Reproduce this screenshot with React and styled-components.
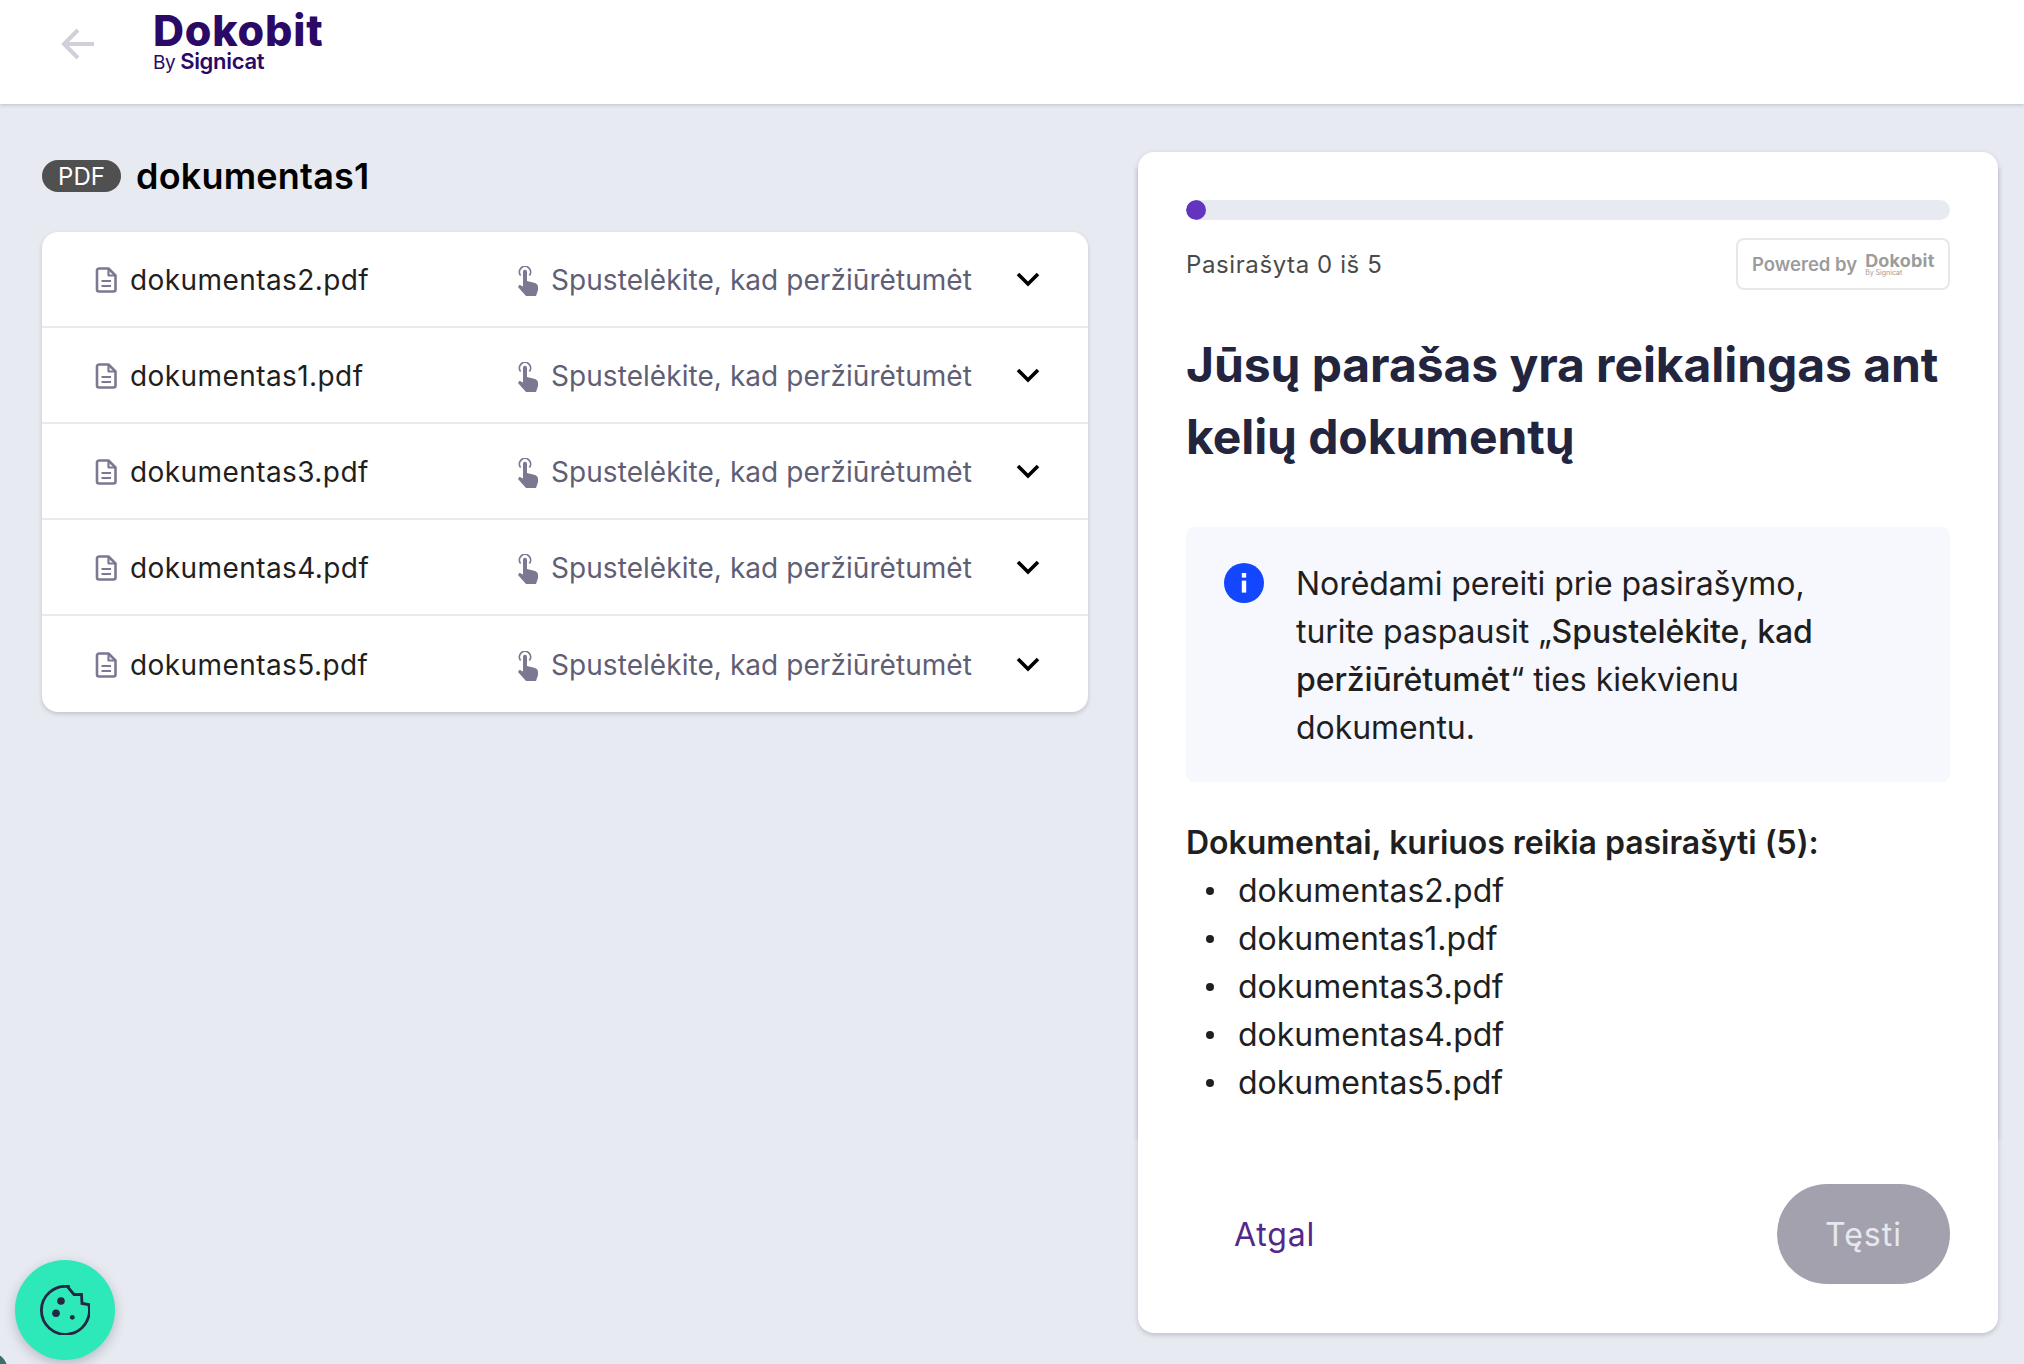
import React from 'react';
import styled, { createGlobalStyle } from 'styled-components';

const Global = createGlobalStyle`
  html, body { margin: 0; padding: 0; background: #e7eaf0; }
  body { font-family: Inter, "Liberation Sans", sans-serif; overflow: hidden; }
  * { box-sizing: border-box; }
`;
const Page = styled.div`height: 1364px; display: flex; flex-direction: column; background: #e7eaf0;`;
const Header = styled.header`
  height: 104px; flex: none; background: #fff; display: flex; align-items: flex-start;
  box-shadow: 0 1px 4px rgba(40, 44, 70, 0.22); position: relative; z-index: 1;
`;
const BackButton = styled.div`width: 34px; margin: 27px 0 0 61px; color: #cfd0d9; display: flex;`;
const Logo = styled.div`margin: 9px 0 0 58px; color: #2a0a66; display: flex; flex-direction: column;`;
const LogoName = styled.div`font-size: 43px; font-weight: 800; line-height: 42px; letter-spacing: 0.8px;`;
const LogoSub = styled.div`font-size: 19px; line-height: 21px; margin-top: 0; display: flex; gap: 5px; align-items: baseline;
  b { font-weight: 600; font-size: 22px; letter-spacing: -0.3px; }
  span { font-weight: 400; letter-spacing: -0.5px; }
`;
const Main = styled.main`flex: 1; display: flex; align-items: flex-start; padding: 48px 26px 0 42px; gap: 50px;`;
const LeftColumn = styled.section`width: 1046px; flex: none;`;
const TitleRow = styled.div`height: 32px; margin-top: 8px; display: flex; align-items: center; gap: 15px;`;
const Pill = styled.span`
  width: 79px; height: 32px; border-radius: 16px; background: #505050; color: #fff;
  font-size: 24px; display: flex; align-items: center; justify-content: center;
`;
const Title = styled.h1`margin: 0; font-size: 36px; font-weight: 600; color: #000; line-height: 32px; letter-spacing: 0.2px;`;
const DocCard = styled.div`
  margin-top: 40px; background: #fff; border-radius: 16px; overflow: hidden;
  box-shadow: 0 2px 4px rgba(40, 44, 70, 0.2);
`;
const DocRow = styled.div`
  height: 96px; display: flex; align-items: center; padding: 2px 0 0 53px;
  border-bottom: 2px solid #e7eaf0;
  &:last-child { border-bottom: 0; }
`;
const FileIcon = styled.svg`width: 22px; height: 26px; flex: none;`;
const FileName = styled.span`margin-left: 13px; width: 388px; font-size: 28px; color: #1f1f1f; letter-spacing: 0.42px;`;
const HandIcon = styled.svg`width: 20px; height: 30px; flex: none; margin-top: 2px;`;
const Hint = styled.span`margin-left: 13px; font-size: 28px; color: #5f5e75; letter-spacing: 0.06px; white-space: nowrap; width: 465px;`;
const Chevron = styled.svg`width: 24px; height: 16px; flex: none; margin-top: -2px;`;
const SignCard = styled.section`
  width: 860px; height: 1181px; flex: none; background: #fff; border-radius: 16px; padding: 48px; position: relative;
  box-shadow: 0 2px 5px rgba(40, 44, 70, 0.22); display: flex; flex-direction: column;
  &::before {
    content: ''; position: absolute; left: 0; right: 0; top: 16px; height: 972px; pointer-events: none;
    box-shadow: 0 0 6px rgba(40, 44, 70, 0.14); clip-path: inset(0 -8px);
  }
`;
const Track = styled.div`height: 20px; border-radius: 10px; background: #e7eaf0; overflow: hidden;`;
const Fill = styled.div`height: 100%; border-radius: 10px; background: #6334bf;`;
const MetaRow = styled.div`margin-top: 18px; height: 52px; display: flex; justify-content: space-between; align-items: center;`;
const MetaText = styled.span`font-size: 24px; color: #4a4a4a; letter-spacing: 0.6px;`;
const Powered = styled.div`
  width: 214px; height: 52px; border: 2px solid #e8e8e8; border-radius: 8px; display: flex;
  align-items: center; padding-left: 14px; gap: 8px; color: #9c9c9c; white-space: nowrap;
`;
const PoweredText = styled.span`font-size: 18.5px; font-weight: 600;`;
const PoweredLogo = styled.div`display: flex; flex-direction: column;`;
const PoweredName = styled.span`font-size: 18px; font-weight: 700; line-height: 17px; letter-spacing: 0.2px;`;
const PoweredSub = styled.span`font-size: 7px; line-height: 8px;`;
const Heading = styled.h2`margin: 39px 0 0; font-size: 48px; line-height: 72px; font-weight: 700; color: #23253f; letter-spacing: -0.08px;`;
const InfoBox = styled.div`
  margin-top: 54px; height: 255px; background: #f7f8fd; border-radius: 8px; display: flex;
  padding: 36px 90px 0 38px;
`;
const InfoIcon = styled.svg`width: 40px; height: 40px; flex: none;`;
const InfoText = styled.p`margin: -3px 0 0 32px; font-size: 32px; line-height: 48px; color: #1f1f1f; letter-spacing: -0.06px;
  b { font-weight: 500; }
`;
const DocsHeading = styled.div`margin-top: 37px; font-size: 32px; line-height: 48px; font-weight: 600; color: #1f1f1f; letter-spacing: -0.03px;`;
const DocsList = styled.ul`margin: 0; padding: 0 0 0 20px; list-style: none; font-size: 32px; line-height: 48px; color: #1f1f1f;`;
const DocsItem = styled.li`display: flex; align-items: center; gap: 24px;
  &::before { content: ''; width: 8px; height: 8px; border-radius: 50%; background: #1f1f1f; flex: none; }
`;
const Footer = styled.div`margin-top: auto; display: flex; justify-content: space-between; align-items: center;`;
const BackLink = styled.a`margin-left: 48px; font-size: 32px; color: #52288a; letter-spacing: 0.8px;`;
const NextButton = styled.button`
  width: 173px; height: 100px; border: 0; border-radius: 50px; background: #a3a1ae; color: #e7e8ee;
  font: 400 32px Inter, sans-serif; letter-spacing: 1px; margin-bottom: 1px;
`;
const CookieButton = styled.div`
  position: fixed; left: 15px; top: 1260px; width: 100px; height: 100px; border-radius: 50%;
  background: #2de8b9; box-shadow: 0 4px 12px rgba(40, 44, 70, 0.25); display: flex;
  align-items: center; justify-content: center;
`;
const CornerMark = styled.div`
  position: fixed; left: -30px; top: 1352px; width: 38px; height: 38px; border-radius: 50%; background: #3c6e6a;
`;

const docs = ['dokumentas2.pdf', 'dokumentas1.pdf', 'dokumentas3.pdf', 'dokumentas4.pdf', 'dokumentas5.pdf'];

const File = () => (
  <FileIcon viewBox="0 0 22 26" fill="none" stroke="#7b7892" strokeWidth="2.6" strokeLinejoin="round">
    <path d="M2 3.5A2 2 0 0 1 4 1.5h9.5L20.5 8.5V22.5a2 2 0 0 1-2 2H4a2 2 0 0 1-2-2Z" />
    <path d="M13.5 2V8.5H20" strokeWidth="2.2" />
    <path d="M6.5 14H16M6.5 19H16" strokeWidth="2.2" />
  </FileIcon>
);
const Hand = () => (
  <HandIcon viewBox="0 0 20 30">
    <path d="M2.6 9.5a5.6 5.6 0 1 1 8.8 0" fill="none" stroke="#7b7892" strokeWidth="1.8" />
    <path d="M5 5.8a2 2 0 0 1 4 0V15l8 2q3 1 3 4v3l-2 6H8L0 21l1.5-2.2L5 20.5Z" fill="#7b7892" />
  </HandIcon>
);

export default function App() {
  return (
    <Page>
      <Global />
      <Header>
        <BackButton>
          <svg width="34" height="34" viewBox="0 0 34 34" fill="none" stroke="currentColor" strokeWidth="4">
            <path d="M33 17H3M17 3 3 17l14 14" />
          </svg>
        </BackButton>
        <Logo>
          <LogoName>Dokobit</LogoName>
          <LogoSub><span>By</span><b>Signicat</b></LogoSub>
        </Logo>
      </Header>
      <Main>
        <LeftColumn>
          <TitleRow><Pill>PDF</Pill><Title>dokumentas1</Title></TitleRow>
          <DocCard>
            {docs.map((d) => (
              <DocRow key={d}>
                <File />
                <FileName>{d}</FileName>
                <Hand />
                <Hint>Spustelėkite, kad peržiūrėtumėt</Hint>
                <Chevron viewBox="0 0 24 16" fill="none" stroke="#000" strokeWidth="3.6"><path d="M2 3l10 10L22 3" /></Chevron>
              </DocRow>
            ))}
          </DocCard>
        </LeftColumn>
        <SignCard>
          <Track><Fill style={{ width: 20 }} /></Track>
          <MetaRow>
            <MetaText>Pasirašyta 0 iš 5</MetaText>
            <Powered>
              <PoweredText>Powered by</PoweredText>
              <PoweredLogo><PoweredName>Dokobit</PoweredName><PoweredSub>By Signicat</PoweredSub></PoweredLogo>
            </Powered>
          </MetaRow>
          <Heading>Jūsų parašas yra reikalingas ant kelių dokumentų</Heading>
          <InfoBox>
            <InfoIcon viewBox="0 0 40 40">
              <circle cx="20" cy="20" r="20" fill="#1346ff" />
              <rect x="17.8" y="10" width="4.4" height="4.6" fill="#fff" />
              <rect x="17.8" y="17.6" width="4.4" height="12" fill="#fff" />
            </InfoIcon>
            <InfoText>Norėdami pereiti prie pasirašymo, turite paspausit „<b>Spustelėkite, kad peržiūrėtumėt</b>“ ties kiekvienu dokumentu.</InfoText>
          </InfoBox>
          <DocsHeading>Dokumentai, kuriuos reikia pasirašyti (5):</DocsHeading>
          <DocsList>{docs.map((d) => <DocsItem key={d}>{d}</DocsItem>)}</DocsList>
          <Footer>
            <BackLink>Atgal</BackLink>
            <NextButton>Tęsti</NextButton>
          </Footer>
        </SignCard>
      </Main>
      <CornerMark />
      <CookieButton>
        <svg width="50" height="50" viewBox="0 0 50 50" fill="none" stroke="#252743" strokeWidth="2.8" strokeLinejoin="miter">
          <path d="M28.5 1.5A24 24 0 1 0 48.7 19.5L42 18.5 41.5 9.5 34 9.5 28.5 3Z" />
          <circle cx="21" cy="16" r="3.8" fill="#252743" stroke="none" />
          <circle cx="16" cy="28.3" r="3.8" fill="#252743" stroke="none" />
          <circle cx="32.3" cy="32.3" r="2.4" fill="#252743" stroke="none" />
        </svg>
      </CookieButton>
    </Page>
  );
}
